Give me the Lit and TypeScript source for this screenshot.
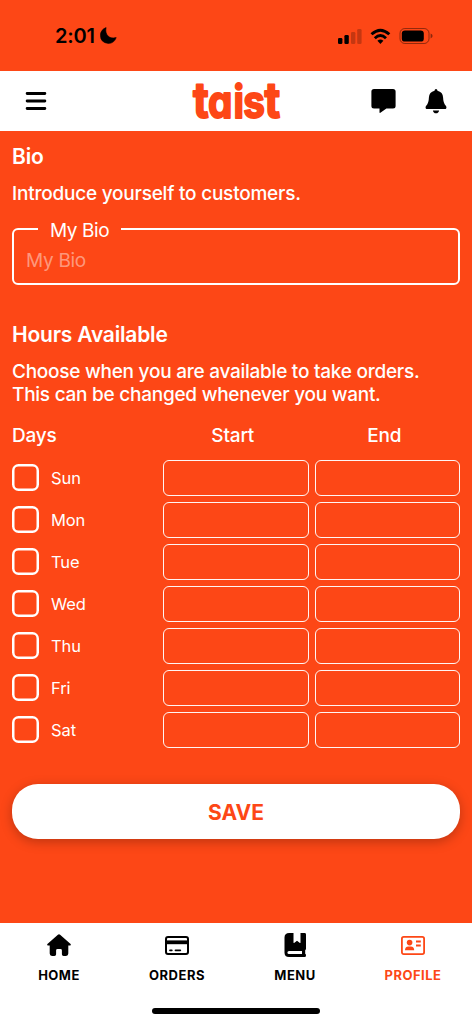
import { LitElement, html, css, svg } from "lit";
import { customElement } from "lit/decorators.js";

const DAYS = ["Sun", "Mon", "Tue", "Wed", "Thu", "Fri", "Sat"];

const home = svg`<path d="M12 2.2 Q12.6 2.2 13.1 2.7 L23.6 11.9 Q24 12.4 23.7 12.9 Q23.5 13.4 22.8 13.4 H21.3 V21.6 Q21.3 24 19 24 H16.6 Q14.9 24 14.9 22.3 V18.4 Q14.9 17 13.5 17 H10.5 Q9.1 17 9.1 18.4 V22.3 Q9.1 24 7.4 24 H5 Q2.7 24 2.7 21.6 V13.4 H1.2 Q.5 13.4 .3 12.9 Q0 12.4 .4 11.9 L10.9 2.7 Q11.4 2.2 12 2.2Z" transform="translate(0 -1)"/>`;
const card = svg`<rect x="1" y="4" width="22" height="17" rx="2" fill="none" stroke="currentColor" stroke-width="2"/><path d="M1 7.4h22v3.8H1z"/><path d="M5 17.3h1.8M10.5 17.3h4.8" stroke="currentColor" stroke-width="1.8" stroke-linecap="round"/>`;
const book = svg`<path transform="translate(1 0)" fill-rule="evenodd" d="M5.2 0H9.5V9.6Q9.5 10.2 10.1 9.9L13 7.7L15.9 9.9Q16.5 10.2 16.5 9.6V0H20.6Q22 0 22 1.4V15.8Q22 16.8 21.2 17.2V20.8Q22 21.2 22 22.4Q22 24 20.6 24H5Q.5 24 .5 19.8V4.6Q.5 0 5.2 0ZM5 18Q3.4 18 3.4 19.5Q3.4 21 5 21H18V18Z"/>`;
const idcard = svg`<rect x=".9" y="3.9" width="22.2" height="17.2" rx="1.8" fill="none" stroke="currentColor" stroke-width="1.8"/><circle cx="8.6" cy="9.6" r="2.8"/><path d="M4 17.2Q4 13.4 7.4 13.4H9.8Q13.2 13.4 13.2 17.2ZM15 7.6h4.8v1.9H15zM15 11.6h4.8v1.9H15z"/>`;

const TABS = [
  { label: "HOME", icon: home, on: false },
  { label: "ORDERS", icon: card, on: false },
  { label: "MENU", icon: book, on: false },
  { label: "PROFILE", icon: idcard, on: true },
];

@customElement("app-root")
export class AppRoot extends LitElement {
  static styles = css`
    :host {
      --brand: #fd4716;
      display: flex;
      flex-direction: column;
      width: 100%;
      height: 1024px;
      box-sizing: border-box;
      overflow: hidden;
      background: var(--brand);
      color: #fff;
      font-family: Inter, "Liberation Sans", sans-serif;
    }
    * { box-sizing: border-box; }
    svg { display: block; fill: currentColor; }
    .status {
      height: 71px;
      flex: none;
      display: flex;
      align-items: center;
      justify-content: space-between;
      padding: 0 39px 0 55px;
      color: #000;
    }
    .clock { display: flex; align-items: center; gap: 5px; font-size: 20px; font-weight: 600; letter-spacing: -0.2px; line-height: 24px; }
    .top {
      height: 60px;
      flex: none;
      display: grid;
      grid-template-columns: 1fr auto 1fr;
      align-items: center;
      padding: 0 24px;
      background: #fff;
      color: #000;
    }
    .logo { color: var(--brand); font-weight: 700; font-feature-settings: "cv11", "ss07" 0, "ss03"; }
    .actions { display: flex; justify-content: flex-end; gap: 28px; }
    main { flex: 1; padding: 14px 12px 0; }
    h2 { margin: 0; font-size: 21px; font-weight: 600; line-height: 24px; letter-spacing: -0.2px; }
    p { margin: 0; font-size: 19px; font-weight: 500; line-height: 23px; letter-spacing: -0.22px; }
    .intro { margin-top: 13px; }
    .bio {
      margin: 13px 0 0;
      height: 67px;
      border: 2px solid #fff;
      border-radius: 6px;
      padding: 0 12px;
      min-width: 0;
    }
    .bio legend { margin-left: 12px; padding: 0 12px; height: 22px; font-size: 19px; line-height: 25px; letter-spacing: -0.4px; }
    .hint { font-size: 19px; line-height: 24px; margin-top: 9px; letter-spacing: -0.3px; color: rgba(255, 255, 255, 0.45); }
    .hours { margin-top: 38px; }
    .choose { margin-top: 13px; letter-spacing: -0.25px; }
    .table { display: grid; grid-template-columns: 145px 145.5px 145.5px; column-gap: 6px; row-gap: 6px; margin-top: 18px; }
    .th { font-size: 19px; font-weight: 500; line-height: 24px; margin-bottom: 6px; text-align: center; padding-right: 6px; letter-spacing: -0.2px; }
    .first { text-align: left; }
    .day { display: flex; align-items: center; gap: 12px; height: 36px; padding-bottom: 1px; font-size: 16.5px; letter-spacing: -0.1px; }
    .box { width: 27px; height: 27px; box-shadow: inset 0 0 0 2.5px #fff; border-radius: 6.5px; }
    .slot { height: 36px; border: 1px solid rgba(255, 255, 255, 0.95); border-radius: 6px; }
    .save {
      display: block;
      width: 100%;
      height: 55px;
      margin-top: 36px;
      border: 0;
      border-radius: 26px;
      background: #fff;
      color: var(--brand);
      font: 700 21px/55px Inter, sans-serif;
      text-align: center;
      box-shadow: 0 3px 12px rgba(0, 0, 0, 0.25);
    }
    .tabs {
      height: 101px;
      flex: none;
      display: flex;
      flex-direction: column;
      align-items: center;
      justify-content: space-between;
      background: #fff;
      color: #000;
      padding: 10px 0;
    }
    .row { display: grid; grid-template-columns: repeat(4, 1fr); width: 100%; }
    .tab { display: flex; flex-direction: column; align-items: center; gap: 10px; font-size: 13px; font-weight: 700; line-height: 16px; letter-spacing: 0.5px; }
    .on { color: var(--brand); }
    .bar { width: 168px; height: 6px; border-radius: 3px; background: #000; }
  `;

  render() {
    return html`
      <div class="status">
        <div class="clock">
          <span>2:01</span>
          <svg width="17" height="17" viewBox="0 0 17 17"><path d="M6.1.6Q4.9 5.9 8 9Q11 12 16.2 10.6Q14.2 16.4 8.4 16.4Q.6 15.8.4 8.4Q.6 2.6 6.1.6Z" stroke="#000" stroke-width=".6" stroke-linejoin="round"/></svg>
        </div>
        <svg width="95" height="18" viewBox="0 0 95 18">
          <rect x="0" y="11" width="4.4" height="6" rx="1.3"/>
          <rect x="6.4" y="8" width="4.4" height="9" rx="1.3"/>
          <rect x="13" y="5" width="4.4" height="12" rx="1.3" opacity=".22"/>
          <rect x="19.2" y="2" width="4.4" height="15" rx="1.3" opacity=".22"/>
          <g fill="none" stroke="#000" stroke-width="2.9"><path d="M33.5 7.3Q42.4-1 51.3 7.3"/><path d="M36.8 11.2Q42.4 6 48 11.2"/></g>
          <path d="M39.4 13.8Q42.4 11 45.4 13.8L42.4 17Z"/>
          <rect x="62" y="1.5" width="29" height="15" rx="4.8" fill="none" stroke="#000" opacity=".42"/>
          <rect x="63.8" y="3.4" width="22" height="11.2" rx="3.2"/>
          <path d="M92.6 6.6Q94.6 7.5 94.6 9T92.6 11.4Z" opacity=".45"/>
        </svg>
      </div>
      <div class="top">
        <svg width="24" height="24" viewBox="0 0 24 24"><path d="M3.1 4.5h17.8M3.1 12h17.8M3.1 19.5h17.8" stroke="#000" stroke-width="2.8" stroke-linecap="round"/></svg>
        <svg class="logo" width="104" height="60" viewBox="0 0 104 60">
          <g stroke="currentColor" stroke-width="1.9" stroke-linejoin="round" font-family="Inter, sans-serif" font-size="45">
            <text transform="translate(9 47) scale(.86 1)"><tspan x="0" font-size="50">t</tspan><tspan x="17.5">a</tspan><tspan x="47">i</tspan><tspan x="58.5">s</tspan><tspan x="83" font-size="50">t</tspan></text>
          </g>
        </svg>
        <div class="actions">
          <svg width="25" height="26" viewBox="0 0 25 26"><path d="M3 1H22Q24.6 1 24.6 3.6V18Q24.6 20.5 22 20.5H15.4L9.4 24.8Q8.5 25.2 8.5 24.2V20.5H3Q.4 20.5.4 18V3.6Q.4 1 3 1Z"/></svg>
          <svg width="24" height="26" viewBox="0 0 24 26"><path d="M12 1Q13.3 1 13.5 2.8Q18.8 4 19.1 9.6Q19.2 15.3 21.8 17.8Q23 19 22.2 20.4Q21.8 21 20.8 21H3.2Q2.2 21 1.8 20.4Q1 19 2.2 17.8Q4.8 15.3 4.9 9.6Q5.2 4 10.5 2.8Q10.7 1 12 1ZM8.9 22.4H15.1Q14.6 25.2 12 25.2T8.9 22.4Z"/></svg>
        </div>
      </div>
      <main>
        <h2>Bio</h2>
        <p class="intro">Introduce yourself to customers.</p>
        <fieldset class="bio"><legend>My Bio</legend><div class="hint">My Bio</div></fieldset>
        <h2 class="hours">Hours Available</h2>
        <p class="choose">Choose when you are available to take orders.<br />This can be changed whenever you want.</p>
        <div class="table">
          <div class="th first">Days</div><div class="th">Start</div><div class="th">End</div>
          ${DAYS.map((d) => html`<div class="day"><span class="box"></span><span>${d}</span></div><div class="slot"></div><div class="slot"></div>`)}
        </div>
        <button class="save">SAVE</button>
      </main>
      <div class="tabs">
        <div class="row">
          ${TABS.map((t) => html`<div class="tab ${t.on ? "on" : ""}"><svg width="24" height="24" viewBox="0 0 24 24">${t.icon}</svg><span>${t.label}</span></div>`)}
        </div>
        <div class="bar"></div>
      </div>
    `;
  }
}
